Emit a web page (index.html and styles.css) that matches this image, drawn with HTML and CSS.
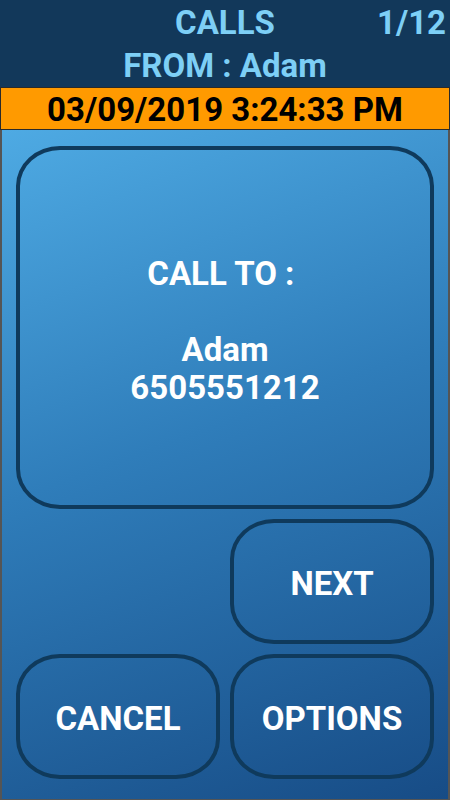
FILE: index.html
```html
<!DOCTYPE html>
<html>
<head>
<meta charset="utf-8">
<link rel="stylesheet" href="styles.css">
</head>
<body>
<div class="screen">
  <header class="top">
    <div class="title-row">
      <span class="title">CALLS</span>
      <span class="count">1/12</span>
    </div>
    <div class="from">FROM : Adam</div>
  </header>
  <div class="datebar">03/09/2019 3:24:33 PM</div>
  <main class="body">
    <section class="card">
      <div class="call-to">CALL TO :&nbsp;</div>
      <div class="spacer"></div>
      <div class="name">Adam</div>
      <div class="number">6505551212</div>
    </section>
    <div class="buttons">
      <button class="btn next">NEXT</button>
      <button class="btn cancel">CANCEL</button>
      <button class="btn options">OPTIONS</button>
    </div>
  </main>
</div>
</body>
</html>
```
FILE: styles.css
```css
html, body {
  margin: 0;
  padding: 0;
}
body {
  width: 450px;
  height: 800px;
  overflow: hidden;
  font-family: Roboto, "Liberation Sans", sans-serif;
  font-weight: 700;
}
.screen {
  width: 450px;
  height: 800px;
  display: flex;
  flex-direction: column;
}
.top {
  background: #12385a;
  color: #7dcff6;
  height: 87px;
  display: flex;
  flex-direction: column;
  box-sizing: border-box;
  padding-top: 3px;
}
.title-row {
  position: relative;
  height: 40px;
  display: flex;
  justify-content: center;
  align-items: center;
}
.title {
  font-size: 33px;
}
.count {
  position: absolute;
  right: 4px;
  top: 0;
  line-height: 40px;
  font-size: 33px;
}
.from {
  text-align: center;
  font-size: 33px;
  line-height: 48px;
}
.datebar {
  background: #ff9a00;
  border: 1px solid #2a2a2a;
  height: 41px;
  line-height: 43px;
  text-align: center;
  color: #000;
  font-size: 33px;
}
.body {
  flex: 1;
  background: linear-gradient(160deg, #4eaae3 0%, #2f7dba 45%, #174c86 100%);
  border-left: 2px solid #555;
  border-right: 2px solid #555;
  border-bottom: 2px solid #555;
  padding: 16px 14px 20px 14px;
  display: flex;
  flex-direction: column;
  gap: 10px;
}
.card {
  height: 363px;
  box-sizing: border-box;
  border: 4px solid #0f3a5c;
  border-radius: 44px / 40px;
  display: flex;
  flex-direction: column;
  justify-content: center;
  align-items: center;
  color: #fff;
  font-size: 33px;
  line-height: 38px;
  padding-top: 6px;
}
.spacer {
  height: 38px;
}
.buttons {
  display: grid;
  grid-template-columns: 1fr 1fr;
  grid-template-rows: 125px 125px;
  column-gap: 10px;
  row-gap: 10px;
}
.btn {
  background: transparent;
  border: 4px solid #0f3a5c;
  border-radius: 44px / 40px;
  color: #fff;
  font-family: Roboto, "Liberation Sans", sans-serif;
  font-weight: 700;
  font-size: 33px;
  padding: 4px 0 0 0;
  margin: 0;
}
.next {
  grid-column: 2;
  grid-row: 1;
}
.cancel {
  grid-column: 1;
  grid-row: 2;
}
.options {
  grid-column: 2;
  grid-row: 2;
}
```
